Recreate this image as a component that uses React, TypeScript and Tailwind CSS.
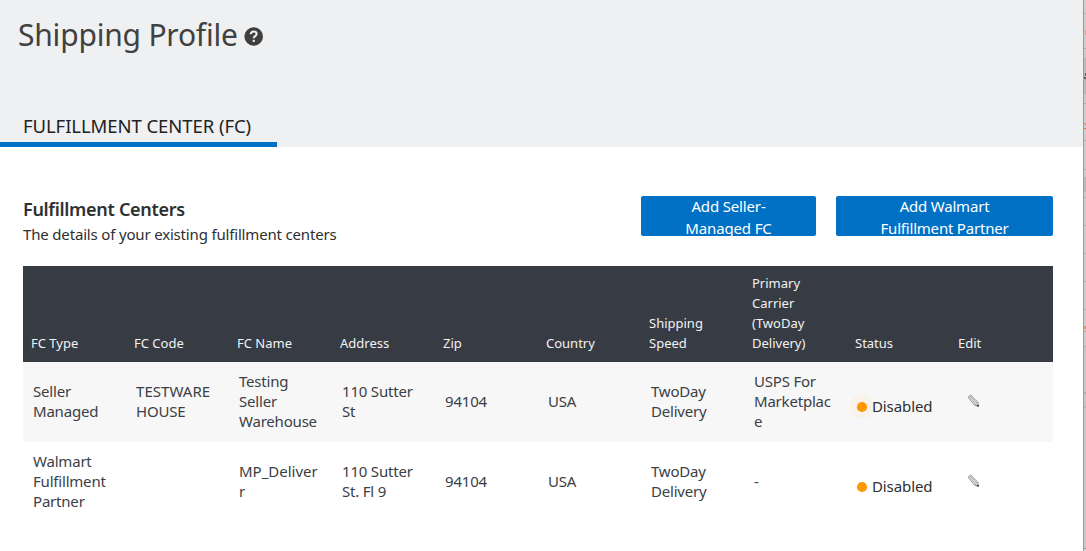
import React from "react";

const HEADERS: string[][] = [
  ["FC Type"],
  ["FC Code"],
  ["FC Name"],
  ["Address"],
  ["Zip"],
  ["Country"],
  ["Shipping", "Speed"],
  ["Primary", "Carrier", "(TwoDay", "Delivery)"],
  ["Status"],
  ["Edit"],
];

type Row = { cells: string[][]; striped: boolean };

const ROWS: Row[] = [
  {
    striped: true,
    cells: [
      ["Seller", "Managed"],
      ["TESTWARE", "HOUSE"],
      ["Testing", "Seller", "Warehouse"],
      ["110 Sutter", "St"],
      ["94104"],
      ["USA"],
      ["TwoDay", "Delivery"],
      ["USPS For", "Marketplac", "e"],
    ],
  },
  {
    striped: false,
    cells: [
      ["Walmart", "Fulfillment", "Partner"],
      [],
      ["MP_Deliver", "r"],
      ["110 Sutter", "St. Fl 9"],
      ["94104"],
      ["USA"],
      ["TwoDay", "Delivery"],
      ["-"],
    ],
  },
];

function Lines({ lines }: { lines: string[] }) {
  return (
    <>
      {lines.map((line) => (
        <div
          key={line}
          className={`whitespace-nowrap ${
            line === "TESTWARE" ? "tracking-[0.05px]" : line === "MP_Deliver" ? "tracking-[0px]" : ""
          }`}
        >
          {line}
        </div>
      ))}
    </>
  );
}

function HelpIcon() {
  return (
    <svg className="mt-[27px] ml-[7px] h-[19px] w-[19px]" viewBox="0 0 19 19">
      <circle cx="9.7" cy="9.5" r="9.3" fill="#3f3f3f" />
      <path
        d="M6.8 7.3C6.8 5.4 8 4.5 9.7 4.5s2.9 1 2.9 2.5c0 2.2-2.9 2.2-2.9 4.3"
        fill="none"
        stroke="#f0f1f3"
        strokeWidth="2.1"
      />
      <rect x="8.7" y="12.8" width="2.1" height="2.1" fill="#f0f1f3" />
    </svg>
  );
}

function PencilIcon() {
  return (
    <svg className="h-[14px] w-[13px]" viewBox="0 0 13 14">
      <path d="M1 3.2 3.8.9 10.8 8.2 11.6 12.6 7.5 11.2Z" fill="#ececec" stroke="#858585" strokeWidth="0.8" strokeLinejoin="round" />
      <path d="M2.2 2.6 8.7 10.3M3.1 1.8 9.8 9.2M7.5 11.1 10.7 8.3" stroke="#909090" strokeWidth="0.7" fill="none" />
      <path d="M9.2 11.8 11.3 10.2 11.8 12.8Z" fill="#333" />
    </svg>
  );
}

function Status({ halo }: { halo: boolean }) {
  return (
    <div className="flex h-6 items-center">
      <svg className="-ml-[5px] h-6 w-6 shrink-0" viewBox="0 0 24 24">
        {halo && <circle cx="12" cy="12" r="12" fill="#f8f2ea" />}
        <circle cx="12" cy="12" r="5.1" fill="#ff9800" />
      </svg>
      <span className="-ml-[2px] whitespace-nowrap pb-[2px] text-[15px] leading-6 tracking-[-0.1px] text-[#2d2f31]">
        Disabled
      </span>
    </div>
  );
}

const EDGE: [number, string][] = [
  [13, "bg-[#d0d0d0]"],
  [1, "bg-[#b4b4b4]"],
  [34, "bg-[#cecece]"],
  [1, "bg-[#b0b0b0]"],
  [9, "bg-[#cccccc]"],
  [36, "bg-[#b9b9b9]"],
  [9, "bg-[#cccccc]"],
  [1, "bg-[#b0b0b0]"],
  [36, "bg-[#cecece]"],
  [1, "bg-[#b0b0b0]"],
  [28, "bg-[#cecece]"],
  [1, "bg-[#b0b0b0]"],
  [7, "bg-[#cecece]"],
  [15, "bg-[#b9b9b9]"],
  [5, "bg-[#cccccc]"],
  [1, "bg-[#b0b0b0]"],
  [27, "bg-[#cecece]"],
  [1, "bg-[#b0b0b0]"],
  [27, "bg-[#cecece]"],
  [1, "bg-[#b0b0b0]"],
  [27, "bg-[#cecece]"],
  [1, "bg-[#b0b0b0]"],
  [27, "bg-[#cecece]"],
  [1, "bg-[#b0b0b0]"],
  [36, "bg-[#cecece]"],
  [1, "bg-[#b0b0b0]"],
  [45, "bg-[#c8c8c8]"],
  [2, "bg-[#b0b0b0]"],
  [12, "bg-[#c8c8c8]"],
  [2, "bg-[#b8b8b8]"],
  [140, "bg-[#c8c8c8]"],
  [1, "bg-[#999999]"],
  [2, "bg-[#d8d8d8]"],
];

function BackgroundEdge() {
  return (
    <div className="relative flex h-full w-[3px] flex-col overflow-hidden border-l border-[#9c9c9c]">
      {EDGE.map(([height, color], i) => (
        <div key={i} className={`shrink-0 ${color}`} style={{ height }} />
      ))}
      <svg className="absolute left-0 top-0 h-[551px] w-[2px]" viewBox="0 0 2 551">
        <path d="M1 30h1v5h-1z" fill="#d4a898" />
        <path d="M1 73h1v3h-1zM0 77h2v2h-2z" fill="#666" />
        <path d="M0 123h1v1h1v1h-1v3h1v1h-2v-1h1v-4h-1z" fill="#d47a60" />
        <path d="M0 326h2v3h-2zM0 331h2v1h-2z" fill="#d39a8a" />
      </svg>
    </div>
  );
}

export default function App() {
  return (
    <div className="flex h-[551px] w-[1086px] overflow-hidden bg-white font-['Noto_Sans',sans-serif] text-[#2d2f31]">
      <div className="flex w-[1083px] flex-col">
        <header className="flex h-[147px] flex-col justify-between bg-[#eff0f2]">
          <div className="flex items-start pl-[18px]">
            <h1 className="mt-[15px] w-[219px] whitespace-nowrap text-[30px] leading-[40px] tracking-[-0.2px] text-[#414141]">
              Shipping Profile
            </h1>
            <HelpIcon />
          </div>
          <div className="h-[35px] w-[277px] border-b-[5px] border-[#0071c5] pl-[23px]">
            <span className="whitespace-nowrap text-[18.5px] leading-[27px] tracking-[-0.07px] text-[#222]">
              FULFILLMENT CENTER (FC)
            </span>
          </div>
        </header>
        <main className="pl-[23px] pr-[30px] pt-[49px]">
          <div className="flex h-[70px] items-start">
            <div className="w-[618px]">
              <h2 className="whitespace-nowrap text-[18px] font-semibold leading-[27px] tracking-[-0.3px]">
                Fulfillment Centers
              </h2>
              <p className="-mt-px whitespace-nowrap text-[15px] leading-[24px] tracking-[-0.17px]">
                The details of your existing fulfillment centers
              </p>
            </div>
            <button className="h-10 w-[175px] overflow-hidden rounded-[2px] bg-[#0071c5] text-[15px] leading-[22px] tracking-[-0.15px] text-white">
              <div className="-mt-[2px] h-10">
                Add Seller-
                <br />
                Managed FC
              </div>
            </button>
            <button className="ml-5 h-10 w-[217px] overflow-hidden rounded-[2px] bg-[#0071c5] text-[15px] leading-[22px] tracking-[-0.2px] text-white">
              <div className="-mt-[2px] h-10">
                Add Walmart
                <br />
                Fulfillment Partner
              </div>
            </button>
          </div>
          <div>
            <div className="grid h-24 grid-cols-10 items-end bg-[#373c44] pb-[9px] text-[13px] leading-5 text-[#f2f2f2]">
              {HEADERS.map((lines) => (
                <div key={lines[0]} className="pl-2">
                  <Lines lines={lines} />
                </div>
              ))}
            </div>
            {ROWS.map((row, i) => (
              <div
                key={i}
                className={`grid h-20 grid-cols-10 items-center pb-[2px] text-[15px] leading-5 tracking-[-0.2px] text-[#3b4046] ${
                  row.striped ? "bg-[#f7f7f7]" : "bg-white"
                }`}
              >
                {row.cells.map((lines, c) => (
                  <div key={c} className="pl-[10px]">
                    <Lines lines={lines} />
                  </div>
                ))}
                <div className="pt-[12px] pl-[8px]">
                  <Status halo={row.striped} />
                </div>
                <div className="pl-[17px]">
                  <PencilIcon />
                </div>
              </div>
            ))}
          </div>
        </main>
      </div>
      <BackgroundEdge />
    </div>
  );
}
